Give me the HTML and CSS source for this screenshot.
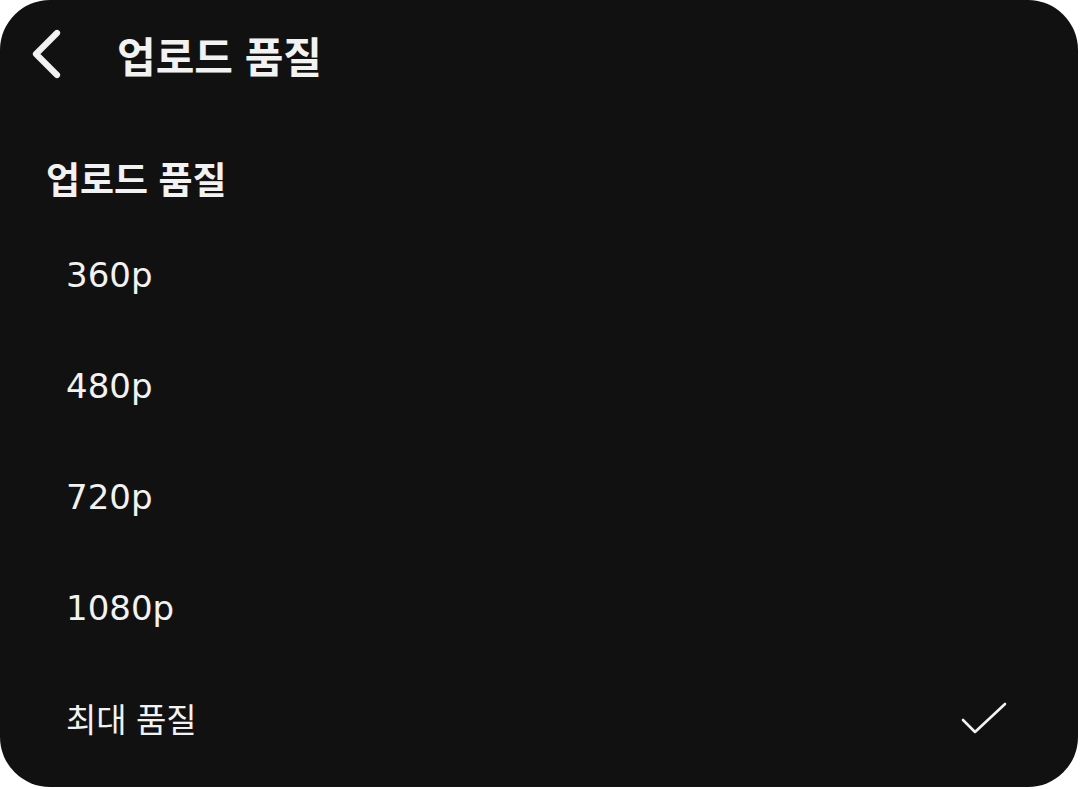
FILE: index.html
```html
<!DOCTYPE html>
<html lang="ko">
<head>
<meta charset="utf-8">
<link rel="stylesheet" href="styles.css">
</head>
<body>
<div class="screen">
  <header class="topbar">
    <svg class="back" width="32" height="50" viewBox="0 0 32 50">
      <path d="M27 4 L6 25 L27 46" fill="none" stroke="#f2f2f2" stroke-width="6.2" stroke-linecap="round" stroke-linejoin="round"/>
    </svg>
    <h1 class="title">업로드 품질</h1>
  </header>
  <h2 class="section">업로드 품질</h2>
  <ul class="options">
    <li class="option">360p</li>
    <li class="option">480p</li>
    <li class="option">720p</li>
    <li class="option">1080p</li>
    <li class="option ko selected">최대 품질
      <svg class="check" width="48" height="36" viewBox="0 0 48 36">
        <path d="M3 18 L15 30 L45 2" fill="none" stroke="#f2f2f2" stroke-width="2.6" stroke-linecap="round" stroke-linejoin="round"/>
      </svg>
    </li>
  </ul>
</div>
</body>
</html>
```
FILE: styles.css
```css
html, body {
  margin: 0;
  padding: 0;
  background: #ffffff;
}
body {
  width: 1080px;
  height: 789px;
  overflow: hidden;
}
.screen {
  width: 1078px;
  height: 787px;
  background: #111111;
  border-radius: 50px;
  color: #f2f2f2;
  font-family: "DejaVu Sans", "Noto Sans CJK KR", sans-serif;
  overflow: hidden;
}
.topbar {
  display: flex;
  align-items: center;
  height: 110px;
  padding-left: 30px;
  box-sizing: border-box;
}
.back {
  display: block;
  margin-top: -2px;
}
.title {
  margin: 0 0 0 55px;
  font-family: "Noto Sans CJK KR", sans-serif;
  font-size: 42px;
  font-weight: 700;
  line-height: 1;
}
.section {
  margin: 50px 0 0 46px;
  height: 37px;
  font-family: "Noto Sans CJK KR", sans-serif;
  font-size: 37px;
  font-weight: 700;
  line-height: 37px;
}
.options {
  list-style: none;
  margin: 22px 0 0 0;
  padding: 0 0 0 66px;
}
.option {
  display: flex;
  align-items: center;
  height: 111px;
  font-size: 34px;
  line-height: 1;
}
.option.ko {
  font-family: "Noto Sans CJK KR", sans-serif;
  font-size: 33px;
}
.check {
  margin-left: auto;
  margin-right: 70px;
  margin-top: 2px;
}
```
